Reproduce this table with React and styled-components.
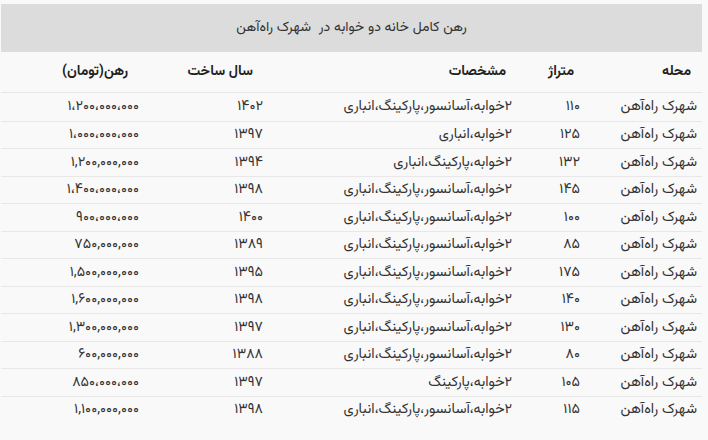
import React from "react";
import styled, { createGlobalStyle } from "styled-components";

const GlobalStyle = createGlobalStyle`
  html, body {
    margin: 0;
    padding: 0;
    background: #f9f9f9;
  }
  body {
    font-family: "Vazirmatn", "Noto Sans Arabic", "DejaVu Sans", sans-serif;
    color: #333;
  }
`;

const rows = [
  ["شهرک راه‌آهن", "۱۱۰", "۲خوابه،آسانسور،پارکینگ،انباری", "۱۴۰۲", "۱،۲۰۰،۰۰۰،۰۰۰"],
  ["شهرک راه‌آهن", "۱۲۵", "۲خوابه،انباری", "۱۳۹۷", "۱،۰۰۰،۰۰۰،۰۰۰"],
  ["شهرک راه‌آهن", "۱۳۲", "۲خوابه،پارکینگ،انباری", "۱۳۹۴", "۱,۲۰۰,۰۰۰,۰۰۰"],
  ["شهرک راه‌آهن", "۱۴۵", "۲خوابه،آسانسور،پارکینگ،انباری", "۱۳۹۸", "۱،۴۰۰،۰۰۰،۰۰۰"],
  ["شهرک راه‌آهن", "۱۰۰", "۲خوابه،آسانسور،پارکینگ،انباری", "۱۴۰۰", "۹۰۰،۰۰۰،۰۰۰"],
  ["شهرک راه‌آهن", "۸۵", "۲خوابه،آسانسور،پارکینگ،انباری", "۱۳۸۹", "۷۵۰,۰۰۰,۰۰۰"],
  ["شهرک راه‌آهن", "۱۷۵", "۲خوابه،آسانسور،پارکینگ،انباری", "۱۳۹۵", "۱,۵۰۰,۰۰۰,۰۰۰"],
  ["شهرک راه‌آهن", "۱۴۰", "۲خوابه،آسانسور،پارکینگ،انباری", "۱۳۹۸", "۱,۶۰۰,۰۰۰,۰۰۰"],
  ["شهرک راه‌آهن", "۱۳۰", "۲خوابه،آسانسور،پارکینگ،انباری", "۱۳۹۷", "۱,۳۰۰,۰۰۰,۰۰۰"],
  ["شهرک راه‌آهن", "۸۰", "۲خوابه،آسانسور،پارکینگ،انباری", "۱۳۸۸", "۶۰۰,۰۰۰,۰۰۰"],
  ["شهرک راه‌آهن", "۱۰۵", "۲خوابه،پارکینگ", "۱۳۹۷", "۸۵۰،۰۰۰،۰۰۰"],
  ["شهرک راه‌آهن", "۱۱۵", "۲خوابه،آسانسور،پارکینگ،انباری", "۱۳۹۸", "۱,۱۰۰,۰۰۰,۰۰۰"],
];

// header label + right padding of the header text
const headers = [
  ["محله", 11],
  ["متراژ", 11],
  ["مشخصات", 11],
  ["سال ساخت", 14],
  ["رهن(تومان)", 15],
];

export default function App() {
  return (
    <>
      <GlobalStyle />
      <Page>
        <Table>
          <Caption>رهن کامل خانه دو خوابه در&nbsp; شهرک راه‌آهن</Caption>
          <HeadRow>
            {headers.map(([h, pad]) => (
              <HeadCell key={h} $pad={pad}>
                {h}
              </HeadCell>
            ))}
          </HeadRow>
          {rows.map((r, i) => (
            <Row key={i} $first={i === 0}>
              {r.map((c, j) => (
                <Cell key={j} $num={j >= 3}>
                  {c}
                </Cell>
              ))}
            </Row>
          ))}
        </Table>
      </Page>
    </>
  );
}

const Page = styled.div`
  padding: 4px 6px 0 1px;
`;

const Table = styled.div`
  direction: rtl;
  width: 701px;
`;

const Caption = styled.div`
  height: 48px;
  background: #dcdcdc;
  display: flex;
  align-items: center;
  justify-content: center;
  font-size: 14px;
  color: #333;
`;

const grid = `
  display: grid;
  grid-template-columns: 117px 68px 250px 124px 142px;
`;

const HeadRow = styled.div`
  ${grid}
  height: 40px;
  align-items: center;
  border-bottom: 1px solid #e6e6e6;
`;

const HeadCell = styled.div`
  text-align: right;
  padding-right: ${(p) => p.$pad}px;
  font-size: 14px;
  font-weight: 700;
  color: #222;
  letter-spacing: 0.3px;
`;

const Row = styled.div`
  ${grid}
  height: 27.5px;
  align-items: center;
  border-top: ${(p) => (p.$first ? "none" : "1px solid #e8e8e8")};
  box-sizing: border-box;
`;

const Cell = styled.div`
  text-align: right;
  padding-right: ${(p) => (p.$num ? 4 : 5)}px;
  font-size: 14.3px;
  color: #333;
  white-space: nowrap;
  letter-spacing: ${(p) => (p.$num ? "1px" : "0")};
`;
